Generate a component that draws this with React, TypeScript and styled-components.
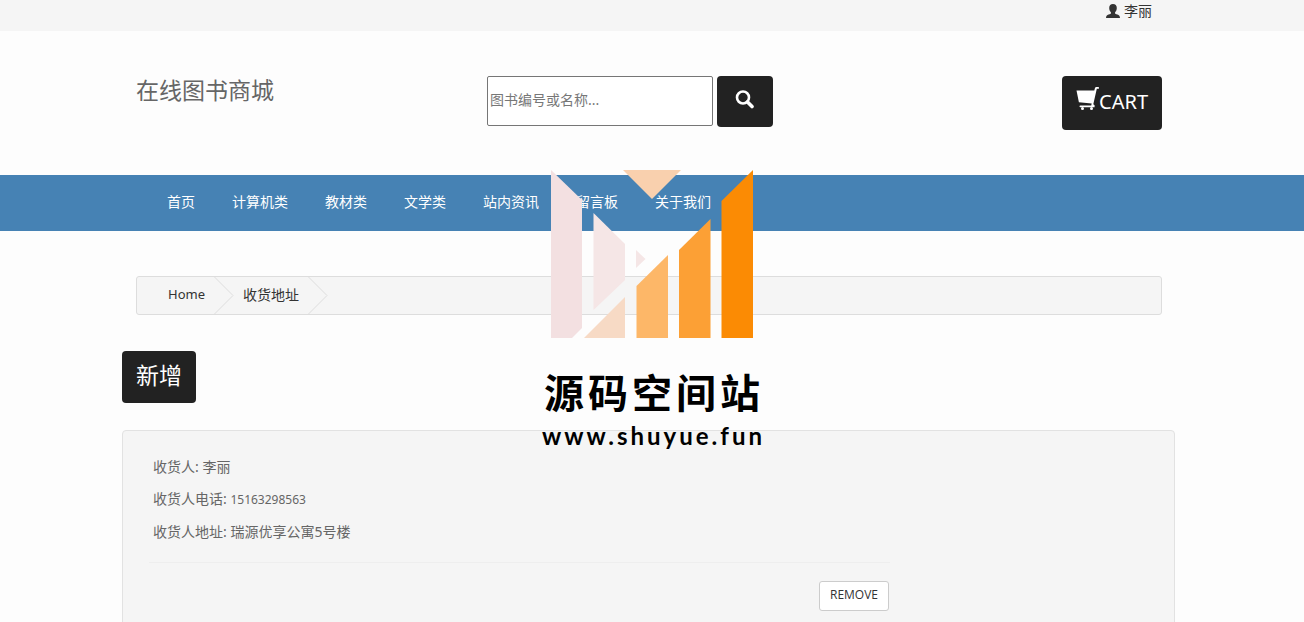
import React from "react";
import styled, { createGlobalStyle } from "styled-components";

const GlobalStyle = createGlobalStyle`
  * { box-sizing: border-box; }
  body {
    margin: 0;
    background: #fdfdfd;
    color: #666;
    font: 14px/20px "Noto Sans", "Noto Sans CJK SC", sans-serif;
  }
  a { color: inherit; text-decoration: none; }
  button { font-family: inherit; cursor: pointer; }
`;

const Page = styled.div`
  position: relative;
  height: 100vh;
  overflow: hidden;
`;

const Container = styled.div`
  max-width: 1060px;
  margin: 0 auto;
  padding: 0 20px 0 14px;
`;

const TopBar = styled.div`
  background: #f5f5f5;
  height: 31px;
`;

const TopBarInner = styled(Container)`
  display: flex;
  justify-content: flex-end;
`;

const UserLink = styled.a`
  display: flex;
  align-items: center;
  gap: 4px;
  height: 21px;
  margin-right: 10px;
  && { color: #333; }
`;

const Header = styled(Container)`
  display: grid;
  grid-template-columns: 351px 1fr auto;
  align-items: start;
  padding-top: 45px;
  padding-bottom: 45px;
`;

const SiteName = styled.h1`
  margin: 0;
  font-size: 23px;
  line-height: 28px;
  font-weight: 400;
  color: #666;
`;

const SearchForm = styled.form`
  display: flex;
  gap: 4px;
`;

const SearchInput = styled.input`
  width: 226px;
  height: 50px;
  padding: 0 2px 3px;
  border: 1px solid #767676;
  border-radius: 2px;
  background: #fff;
  font: inherit;
  &::placeholder { color: #777; opacity: 1; }
`;

const DarkButton = styled.button<{ $height: number; $size?: number }>`
  display: inline-flex;
  align-items: flex-start;
  height: ${(p) => p.$height}px;
  padding: 10px 14px;
  border: 0;
  border-radius: 4px;
  background: #222;
  color: #fff;
  font-size: ${(p) => p.$size ?? 23}px;
  line-height: 28px;
`;

const SearchButton = styled(DarkButton)`
  width: 56px;
  padding: 14px 18px;
`;

const CartButton = styled(DarkButton)`
  padding: 11px 14px;
  line-height: 30px;
`;

const NavBar = styled.nav`
  background: #4682b4;
`;

const NavList = styled.ul`
  display: flex;
  gap: 37px;
  margin: 0;
  padding: 0 31px 2px;
  list-style: none;
  line-height: 54px;
  color: #fff;
`;

const Breadcrumb = styled.ol`
  display: flex;
  margin: 45px 0 36px;
  padding: 0 0 0 31px;
  height: 39px;
  list-style: none;
  background: #f5f5f5;
  border: 1px solid #ddd;
  border-radius: 3px;
  line-height: 35px;
  color: #333;
`;

const Crumb = styled.li<{ $small?: boolean }>`
  display: flex;
  gap: 9px;
  margin-right: 9px;
  font-size: ${(p) => (p.$small ? 13 : 14)}px;
`;

const Wide = styled.div`
  margin: 0 -14px;
`;

const Card = styled.section`
  min-height: 240px;
  margin: 27px 1px 0 0;
  padding: 20px 26px;
  background: #f5f5f5;
  border: 1px solid #e2e2e2;
  border-radius: 4px;
`;

const CardBody = styled.div`
  max-width: 741px;
`;

const Details = styled.div`
  padding: 0 4px 14px;
  border-bottom: 1px solid #eee;
`;

const Detail = styled.p`
  margin: 0;
  line-height: 32px;
`;

const Digits = styled.span`
  font-size: 12px;
`;

const Actions = styled.div`
  display: flex;
  justify-content: flex-end;
  padding: 18px 1px 0 0;
`;

const RemoveButton = styled.button`
  height: 30px;
  padding: 0 10px 3px;
  border: 1px solid #ccc;
  border-radius: 3px;
  background: #fff;
  color: #333;
  font-family: "Open Sans", sans-serif;
  font-size: 12px;
`;

const Watermark = styled.div`
  position: absolute;
  top: 170px;
  left: 0;
  right: 0;
  display: flex;
  flex-direction: column;
  align-items: center;
  color: #000;
  font-weight: 700;
  pointer-events: none;
`;

const WatermarkName = styled.div`
  margin-top: 31px;
  padding-left: 4px;
  font-size: 40px;
  line-height: 48px;
  letter-spacing: 4px;
`;

const WatermarkUrl = styled.div`
  padding-left: 3px;
  font-family: Lato, "Noto Sans", sans-serif;
  font-size: 24px;
  line-height: 38px;
  letter-spacing: 3px;
`;

const UserIcon = () => (
  <svg width="14" height="14" viewBox="0 0 14 14" aria-hidden="true">
    <path fill="#333" d="M7 0C4.600 0 3.200 1.500 3.200 3.900C3.200 5.700 3.900 7.200 4.900 8.100V9.200C4.900 9.800 4 10.100 2.600 10.600C0.900 11.300 0 12 0 14H14C14 12 13.100 11.300 11.400 10.600C10 10.100 9.100 9.800 9.100 9.200V8.100C10.100 7.200 10.800 5.700 10.800 3.900C10.800 1.500 9.400 0 7 0Z" />
  </svg>
);

const SearchIcon = () => (
  <svg width="20" height="19" viewBox="0 0 20 19" aria-hidden="true" fill="none" stroke="#fff">
    <circle cx="8" cy="7.500" r="6" strokeWidth="2.600" />
    <path d="M12.500 12L17 16.500" strokeWidth="3.600" strokeLinecap="round" />
  </svg>
);

const CartIcon = () => (
  <svg width="23" height="24" viewBox="0 0 23 24" aria-hidden="true">
    <path fill="#fff" d="M0.500 3.600H18.300L19 1.100Q19.300 0 20.400 0H22.300Q23 0 23 0.900Q23 1.800 22.200 1.800H20.800L17.300 17.200L18.600 18.200V20.200H4.400Q3.500 20.200 3.500 19.300Q3.500 18.400 4.400 18.400H15.200L15.700 16.600L2.900 15.200Z" />
    <circle cx="6.500" cy="21.500" r="1.500" fill="#fff" />
    <circle cx="15.500" cy="21.500" r="1.500" fill="#fff" />
  </svg>
);

const Chevron = () => (
  <svg width="20" height="37" viewBox="0 0 20 37" fill="none" stroke="#ddd" aria-hidden="true">
    <path d="M0.500 0L19 18.500L0.500 37" />
  </svg>
);

const Emblem = () => (
  <svg width="202" height="168" viewBox="0 0 202 168" aria-hidden="true">
    <path fill="#f3e0e1" d="M0 0L31 30V158L21 168H0Z" />
    <path fill="#f5e6e6" d="M42.500 43L74 74V110L42.500 140Z" />
    <path fill="#f5e6e6" d="M85 80L94.500 89L85 98Z" />
    <path fill="#f7dac5" d="M33 168L74 127V168Z" />
    <path fill="#f9d0ae" d="M72 0H130L101 29Z" />
    <path fill="#fdb768" d="M85.500 116L117 85V168H85.500Z" />
    <path fill="#fca035" d="M128 80L159.500 49V168H128Z" />
    <path fill="#fb8b04" d="M170.500 31L202 0V168H170.500Z" />
  </svg>
);

const categories = ["首页", "计算机类", "教材类", "文学类", "站内资讯", "留言板", "关于我们"];

export default function App() {
  return (
    <Page>
      <GlobalStyle />
      <TopBar>
        <TopBarInner>
          <UserLink href="#user"><UserIcon />李丽</UserLink>
        </TopBarInner>
      </TopBar>
      <Header as="header">
        <SiteName>在线图书商城</SiteName>
        <SearchForm role="search">
          <SearchInput aria-label="图书编号或名称" placeholder="图书编号或名称..." />
          <SearchButton $height={51} type="button" aria-label="搜索"><SearchIcon /></SearchButton>
        </SearchForm>
        <CartButton $height={54} $size={20} type="button"><CartIcon />CART</CartButton>
      </Header>
      <NavBar>
        <Container>
          <NavList>
            {categories.map((name) => (
              <li key={name}><a href="#category">{name}</a></li>
            ))}
          </NavList>
        </Container>
      </NavBar>
      <Container as="main">
        <Breadcrumb>
          <Crumb $small><a href="#home">Home</a><Chevron /></Crumb>
          <Crumb><a href="#address">收货地址</a><Chevron /></Crumb>
        </Breadcrumb>
        <Wide>
          <DarkButton $height={52} type="button">新增</DarkButton>
          <Card>
            <CardBody>
              <Details>
                <Detail>收货人: 李丽</Detail>
                <Detail>收货人电话: <Digits>15163298563</Digits></Detail>
                <Detail>收货人地址: 瑞源优享公寓5号楼</Detail>
              </Details>
              <Actions><RemoveButton type="button">REMOVE</RemoveButton></Actions>
            </CardBody>
          </Card>
        </Wide>
      </Container>
      <Watermark>
        <Emblem />
        <WatermarkName>源码空间站</WatermarkName>
        <WatermarkUrl>www.shuyue.fun</WatermarkUrl>
      </Watermark>
    </Page>
  );
}
